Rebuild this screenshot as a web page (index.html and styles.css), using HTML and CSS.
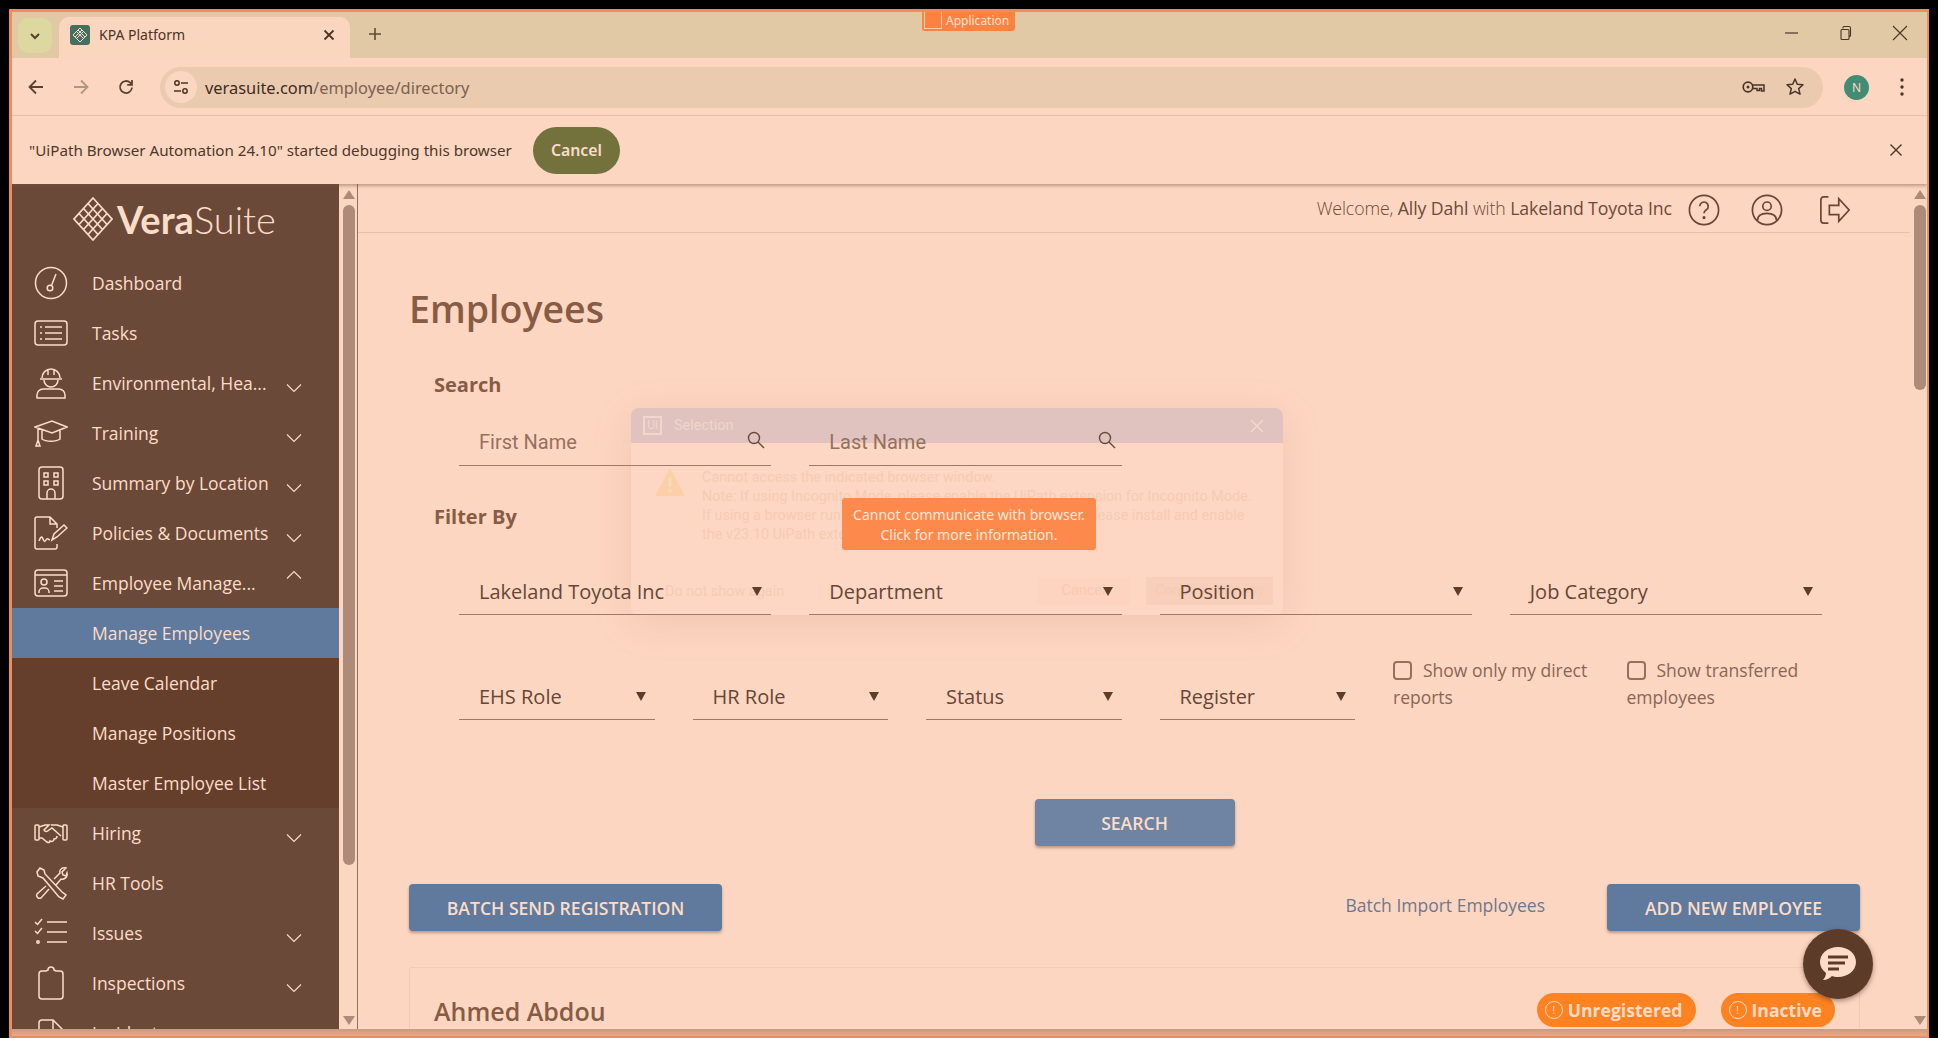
FILE: index.html
```html
<!DOCTYPE html>
<html lang="en">
<head>
    <meta charset="UTF-8">
    <title>KPA Platform</title>
    <link rel="stylesheet" href="styles.css">
</head>
<body>
<div class="window">

    <!-- browser chrome -->
    <div class="tabstrip">
        <button class="tab-search">
            <svg width="14" height="14" viewBox="0 0 14 14"><path d="M3 5l4 4 4-4" fill="none" stroke="#5a3f2c" stroke-width="2"/></svg>
        </button>
        <div class="tab">
            <span class="favicon">
                <svg width="20" height="20" viewBox="0 0 20 20"><path d="M10 3l7 7-7 7-7-7zM6.500 6.500l7 7M13.500 6.500l-7 7M8 5l7 7M12 5l-7 7" fill="none" stroke="#f6dcc6" stroke-width="1"/></svg>
            </span>
            <span class="tab-title">KPA Platform</span>
            <svg class="tab-close" width="14" height="14" viewBox="0 0 14 14"><path d="M2.500 2.500l9 9M11.500 2.500l-9 9" stroke="#4a3426" stroke-width="1.800"/></svg>
        </div>
        <svg class="new-tab" width="16" height="16" viewBox="0 0 16 16"><path d="M8 2v12M2 8h12" stroke="#5f4a36" stroke-width="1.600"/></svg>
        <div class="window-btns">
            <svg width="16" height="16" viewBox="0 0 16 16"><path d="M1 8h13" stroke="#4a3426" stroke-width="1.200"/></svg>
            <svg width="16" height="16" viewBox="0 0 16 16"><path d="M5 3.500V2.500a1 1 0 0 1 1-1h5a1.500 1.500 0 0 1 1.500 1.500v7.500a1 1 0 0 1-1 1H11M3 5.500a1 1 0 0 1 1-1h6a1 1 0 0 1 1 1v8a1 1 0 0 1-1 1H4a1 1 0 0 1-1-1z" fill="none" stroke="#4a3426" stroke-width="1.100"/></svg>
            <svg width="16" height="16" viewBox="0 0 16 16"><path d="M1 1l14 14M15 1L1 15" stroke="#4a3426" stroke-width="1.100"/></svg>
        </div>
    </div>

    <div class="toolbar">
        <svg class="nav-btn" width="20" height="20" viewBox="0 0 20 20"><path d="M17 10H4M10 3.500L3.500 10l6.500 6.500" fill="none" stroke="#5a4030" stroke-width="1.800"/></svg>
        <svg class="nav-btn" width="20" height="20" viewBox="0 0 20 20"><path d="M3 10h13M10 3.500l6.500 6.500-6.500 6.500" fill="none" stroke="#b09680" stroke-width="1.800"/></svg>
        <svg class="nav-btn" width="20" height="20" viewBox="0 0 20 20"><path d="M16 10.500a6 6 0 1 1-1.800-4.800L16 7.500M16 3v4.800h-4.800" fill="none" stroke="#5a4030" stroke-width="1.800"/></svg>
        <div class="omnibox">
            <span class="site-chip">
                <svg width="18" height="18" viewBox="0 0 18 18"><circle cx="5" cy="5" r="2.200" fill="none" stroke="#4a3426" stroke-width="1.500"/><path d="M9 5h7M2 13h7" stroke="#4a3426" stroke-width="1.500"/><circle cx="13" cy="13" r="2.200" fill="none" stroke="#4a3426" stroke-width="1.500"/></svg>
            </span>
            <span class="url">verasuite.com<span class="url-path">/employee/directory</span></span>
            <svg class="omni-icon" width="24" height="16" viewBox="0 0 24 16"><circle cx="6" cy="8" r="4.800" fill="none" stroke="#4a3426" stroke-width="1.700"/><circle cx="6" cy="8" r="1.500" fill="#4a3426"/><path d="M10.500 6h11.500v6h-2.500V9.500h-2V11.500h-2.500V9.500h-4.500" fill="none" stroke="#4a3426" stroke-width="1.500"/></svg>
            <svg class="omni-icon" width="20" height="20" viewBox="0 0 20 20"><path d="M10 2l2.300 5.300 5.700.5-4.300 3.800 1.300 5.600L10 14.300l-5 2.900 1.300-5.600L2 7.800l5.700-.5z" fill="none" stroke="#4a3426" stroke-width="1.500" stroke-linejoin="round"/></svg>
        </div>
        <span class="avatar">N</span>
        <svg class="menu-dots" width="6" height="22" viewBox="0 0 6 22"><circle cx="3" cy="4" r="1.700" fill="#4a3426"/><circle cx="3" cy="11" r="1.700" fill="#4a3426"/><circle cx="3" cy="18" r="1.700" fill="#4a3426"/></svg>
    </div>

    <div class="infobar">
        <span class="info-text">"UiPath Browser Automation 24.10" started debugging this browser</span>
        <button class="info-cancel">Cancel</button>
        <svg class="info-close" width="14" height="14" viewBox="0 0 14 14"><path d="M1.500 1.500l11 11M12.500 1.500l-11 11" stroke="#4a3426" stroke-width="1.400"/></svg>
    </div>

    <!-- page -->
    <div class="page">
        <aside class="sidebar">
            <div class="logo">
                <svg width="40" height="44" viewBox="0 0 40 44"><path d="M20 1l19 21-19 21L1 22zM10.500 11.500l19 21M15 6.500l19 21M6 16.500l19 21M29.500 11.500l-19 21M25 6.500l-19 21M34 16.500l-19 21" fill="none" stroke="#fbdcc8" stroke-width="1.700"/></svg>
                <span class="logo-text"><b>Vera</b>Suite</span>
            </div>
            <nav>
                <a class="nav-item">
                    <svg class="nav-icon" viewBox="0 0 34 34"><circle cx="17" cy="17" r="15.500"/><circle cx="16" cy="22" r="2.800"/><path d="M17.500 19.500L22 8"/></svg>
                    <span class="nav-label">Dashboard</span>
                </a>
                <a class="nav-item">
                    <svg class="nav-icon" viewBox="0 0 34 34"><rect x="1" y="5" width="32" height="24" rx="3"/><path d="M11 11h17M11 17h17M11 23h17M6 11h2M6 17h2M6 23h2"/></svg>
                    <span class="nav-label">Tasks</span>
                </a>
                <a class="nav-item">
                    <svg class="nav-icon" viewBox="0 0 34 34"><path d="M8 12a9 9 0 0 1 18 0M6 13h22M14 4v5M20 4v5M10 14a7 7 0 0 0 14 0M3 32v-3a6 6 0 0 1 6-6h16a6 6 0 0 1 6 6v3z"/></svg>
                    <span class="nav-label">Environmental, Hea...</span>
                    <svg class="caret" viewBox="0 0 16 10"><path d="M1 1.500l7 7 7-7"/></svg>
                </a>
                <a class="nav-item">
                    <svg class="nav-icon" viewBox="0 0 34 34"><path d="M1 11l17-6 15 6-15 6zM8 14v9c4 3 14 3 18 0v-9M4 12v12M2 30l2-6 2 6z"/></svg>
                    <span class="nav-label">Training</span>
                    <svg class="caret" viewBox="0 0 16 10"><path d="M1 1.500l7 7 7-7"/></svg>
                </a>
                <a class="nav-item">
                    <svg class="nav-icon" viewBox="0 0 34 34"><rect x="5" y="1" width="24" height="32" rx="3"/><rect x="10" y="7" width="4" height="4"/><rect x="20" y="7" width="4" height="4"/><rect x="10" y="15" width="4" height="4"/><rect x="20" y="15" width="4" height="4"/><path d="M13 33v-6a4 4 0 0 1 8 0v6"/></svg>
                    <span class="nav-label">Summary by Location</span>
                    <svg class="caret" viewBox="0 0 16 10"><path d="M1 1.500l7 7 7-7"/></svg>
                </a>
                <a class="nav-item">
                    <svg class="nav-icon" viewBox="0 0 34 34"><path d="M23 12V8l-7-7H3a2 2 0 0 0-2 2v28a2 2 0 0 0 2 2h18a2 2 0 0 0 2-2v-3M16 1v7h7M5 25c2-5 3-5 4-2s2 3 3 1 2-1 4 0M18 24l2-6 10-9 3 3-10 9z"/></svg>
                    <span class="nav-label">Policies &amp; Documents</span>
                    <svg class="caret" viewBox="0 0 16 10"><path d="M1 1.500l7 7 7-7"/></svg>
                </a>
                <a class="nav-item">
                    <svg class="nav-icon" viewBox="0 0 34 34"><rect x="1" y="4" width="32" height="26" rx="3"/><path d="M1 9h32M20 15h9M20 20h9M20 25h9M5 27v-1a4 4 0 0 1 4-4h2a4 4 0 0 1 4 4v1"/><circle cx="10" cy="16" r="3"/></svg>
                    <span class="nav-label">Employee Manage...</span>
                    <svg class="caret caret-up" viewBox="0 0 16 10"><path d="M1 8.500l7-7 7 7"/></svg>
                </a>
                <div class="submenu">
                    <a class="sub-item sub-active">Manage Employees</a>
                    <a class="sub-item">Leave Calendar</a>
                    <a class="sub-item">Manage Positions</a>
                    <a class="sub-item">Master Employee List</a>
                </div>
                <a class="nav-item">
                    <svg class="nav-icon" viewBox="0 0 34 34"><rect x="1" y="9" width="4" height="15" rx="1"/><rect x="29" y="9" width="4" height="15" rx="1"/><path d="M5 11l6-2h4l-5 5c1 2 3 2 5 0l3-2 9 8M29 11l-6-2h-6M5 22l3 0 5 4c2 1 3 0 3-1 2 1 4 0 4-2 2 0 3-1 3-3"/></svg>
                    <span class="nav-label">Hiring</span>
                    <svg class="caret" viewBox="0 0 16 10"><path d="M1 1.500l7 7 7-7"/></svg>
                </a>
                <a class="nav-item">
                    <svg class="nav-icon" viewBox="0 0 34 34"><path d="M3 6l3-4 4 2 1 4 17 18 4 3-3 4-4-2L9 12 4 10zM20 13l6-6c-1-3 2-6 6-5l-4 4 1 3 3 1 1-3c1 4-3 7-6 6l-5 6M12 20l-9 8a3 3 0 0 0 4 4l8-9"/></svg>
                    <span class="nav-label">HR Tools</span>
                </a>
                <a class="nav-item">
                    <svg class="nav-icon" viewBox="0 0 34 34"><path d="M1 6l2.500 2.500L8 3M1 15l2.500 2.500L8 12M13 6h20M13 16h20M13 26h20"/><circle cx="4" cy="26" r="1.200"/></svg>
                    <span class="nav-label">Issues</span>
                    <svg class="caret" viewBox="0 0 16 10"><path d="M1 1.500l7 7 7-7"/></svg>
                </a>
                <a class="nav-item">
                    <svg class="nav-icon" viewBox="0 0 34 34"><path d="M12 5H8a3 3 0 0 0-3 3v22a3 3 0 0 0 3 3h18a3 3 0 0 0 3-3V8a3 3 0 0 0-3-3h-4l-2-1a3 3 0 0 0-6 0z"/></svg>
                    <span class="nav-label">Inspections</span>
                    <svg class="caret" viewBox="0 0 16 10"><path d="M1 1.500l7 7 7-7"/></svg>
                </a>
                <a class="nav-item">
                    <svg class="nav-icon" viewBox="0 0 34 34"><path d="M29 33V14L19 4H8a3 3 0 0 0-3 3v26M19 4v10h10"/></svg>
                    <span class="nav-label">Incidents</span>
                </a>
            </nav>
        </aside>

        <div class="scrollbar side-scroll">
            <span class="arrow-up"></span>
            <span class="thumb side-thumb"></span>
            <span class="arrow-down"></span>
        </div>

        <main class="main">
            <header class="topbar">
                <span class="welcome">Welcome, <span class="welcome-name">Ally Dahl</span> with <span class="welcome-name">Lakeland Toyota Inc</span></span>
                <svg class="top-icon" width="32" height="32" viewBox="0 0 34 34"><circle cx="17" cy="17" r="15.500"/><path d="M12.500 13a4.500 4.500 0 1 1 7 3.800c-1.700 1.100-2.500 2-2.500 3.700"/><circle cx="17" cy="25" r=".8"/></svg>
                <svg class="top-icon icon-user" width="32" height="32" viewBox="0 0 34 34"><circle cx="17" cy="17" r="15.500"/><circle cx="17" cy="13" r="4.500"/><path d="M7 28c0-5 4-7.500 10-7.500S27 23 27 28"/></svg>
                <svg class="top-icon icon-logout" width="32" height="32" viewBox="0 0 34 34"><path d="M10 3H5a3 3 0 0 0-3 3v22a3 3 0 0 0 3 3h5M11 12h10V5l11 12-11 12v-7H11z"/></svg>
            </header>

            <section class="content">
                <h1 class="page-title">Employees</h1>

                <h2 class="group-label">Search</h2>
                <div class="grid row-search">
                    <div class="field span-3">
                        <span class="placeholder">First Name</span>
                        <svg class="search-glass" width="18" height="18" viewBox="0 0 18 18"><circle cx="7" cy="7" r="5.500"/><path d="M11 11l6 6"/></svg>
                    </div>
                    <div class="field span-3">
                        <span class="placeholder">Last Name</span>
                        <svg class="search-glass" width="18" height="18" viewBox="0 0 18 18"><circle cx="7" cy="7" r="5.500"/><path d="M11 11l6 6"/></svg>
                    </div>
                </div>

                <h2 class="group-label filter-label">Filter By</h2>
                <div class="grid row-filter">
                    <div class="field span-3"><span>Lakeland Toyota Inc</span><i class="drop"></i></div>
                    <div class="field span-3"><span>Department</span><i class="drop"></i></div>
                    <div class="field span-3"><span>Position</span><i class="drop"></i></div>
                    <div class="field span-3"><span>Job Category</span><i class="drop"></i></div>
                </div>
                <div class="grid row-roles">
                    <div class="field span-2"><span>EHS Role</span><i class="drop"></i></div>
                    <div class="field span-2"><span>HR Role</span><i class="drop"></i></div>
                    <div class="field span-2"><span>Status</span><i class="drop"></i></div>
                    <div class="field span-2"><span>Register</span><i class="drop"></i></div>
                    <label class="check span-2"><i class="box"></i>Show only my direct reports</label>
                    <label class="check span-2"><i class="box"></i>Show transferred employees</label>
                </div>

                <div class="search-row">
                    <button class="btn btn-search">SEARCH</button>
                </div>

                <div class="action-row">
                    <button class="btn btn-batch">BATCH SEND REGISTRATION</button>
                    <a class="import-link">Batch Import Employees</a>
                    <button class="btn btn-add">ADD NEW EMPLOYEE</button>
                </div>

                <div class="card">
                    <span class="card-name">Ahmed Abdou</span>
                    <span class="badge badge-unreg"><i class="badge-dot">!</i>Unregistered</span>
                    <span class="badge"><i class="badge-dot">!</i>Inactive</span>
                </div>
            </section>
        </main>

        <div class="scrollbar main-scroll">
            <span class="arrow-up"></span>
            <span class="thumb main-thumb"></span>
            <span class="arrow-down"></span>
        </div>

        <button class="chat-btn">
            <svg width="40" height="38" viewBox="0 0 40 38"><path d="M20 2c10 0 18 6.500 18 15s-8 15-18 15c-2.500 0-4-.3-6-1-2 2-5 4-9 4 1.500-2 3-4 3-7-4-3-6-7-6-11C2 8.500 10 2 20 2z" fill="#fddcc9"/><path d="M10 12h20M10 18h17M10 24h11" stroke="#5c3c29" stroke-width="3"/></svg>
        </button>

        <!-- UiPath dialog, sits faded behind the page text -->
        <div class="ui-dialog">
            <div class="ui-dialog-head">
                <span class="ui-logo">Ui</span>
                <span class="ui-title">Selection</span>
                <svg class="ui-x" width="16" height="16" viewBox="0 0 16 16"><path d="M2 2l12 12M14 2L2 14" stroke="#f2d8cc" stroke-width="1.500"/></svg>
            </div>
            <div class="ui-dialog-body">
                <svg class="ui-warn" width="30" height="28" viewBox="0 0 30 28"><path d="M15 0l15 28H0z" fill="#fbd0a6"/><rect x="13.500" y="9" width="3" height="10" fill="#fad8bc"/><rect x="13.500" y="21" width="3" height="3" fill="#fad8bc"/></svg>
                <p class="ui-msg">Cannot access the indicated browser window.<br>Note: If using Incognito Mode, please enable the UiPath extension for Incognito Mode.<br>If using a browser running on this device with full privileges, please install and enable<br>the v23.10 UiPath extension for Chrome.</p>
            </div>
            <div class="ui-dialog-foot">
                <span class="ui-noshow">Do not show again</span>
                <span class="ui-btn ui-cancel">Cancel</span>
                <span class="ui-btn ui-continue">Continue anyway</span>
            </div>
        </div>
    </div>

    <div class="bottom-strip"></div>

    <div class="ui-toast">Cannot communicate with browser.<br>Click for more information.</div>
    <div class="app-tag"><i class="app-square"></i>Application</div>
</div>
</body>
</html>
```
FILE: styles.css
```css
html, body {
    margin: 0;
    height: 100%;
    overflow: hidden;
    background: #000;
}
.window {
    position: relative;
    box-sizing: border-box;
    width: 1920px;
    height: 1029px;
    margin: 9px 0 0 9px;
    border: 3px solid #f08c5c;
    border-right-width: 2px;
    border-bottom-width: 2px;
    background: #fdd6c1;
    display: flex;
    flex-direction: column;
    overflow: hidden;
    font-family: "Open Sans", sans-serif;
}

/* tab strip */
.tabstrip {
    height: 46px;
    flex: none;
    background: #e0c9a4;
    display: flex;
    align-items: flex-end;
    position: relative;
}
.tab-search {
    width: 34px;
    height: 35px;
    margin: 0 7px 5px 6px;
    border: none;
    border-radius: 10px;
    background: #dcd8a0;
    padding: 0;
    display: flex;
    align-items: center;
    justify-content: center;
}
.tab {
    width: 291px;
    height: 41px;
    background: #fbd6bf;
    border-radius: 10px 10px 0 0;
    display: flex;
    align-items: center;
    box-sizing: border-box;
    padding: 0 0 6px 11px;
}
.favicon {
    width: 20px;
    height: 20px;
    background: #45705f;
    border-radius: 3px;
    display: block;
}
.favicon svg { display: block; }
.tab-title {
    margin-left: 9px;
    font-family: "Noto Sans", sans-serif;
    font-size: 14px;
    color: #4a3426;
    width: 223px;
}
.new-tab {
    margin: 0 0 16px 17px;
}
.window-btns {
    margin-left: auto;
    display: flex;
    gap: 38px;
    padding: 0 19px 17px 0;
}

/* toolbar */
.toolbar {
    height: 58px;
    flex: none;
    box-sizing: border-box;
    border-bottom: 1px solid #eec4a9;
    display: flex;
    align-items: center;
    padding: 1px 0 0 14px;
    background: #fcd6c0;
}
.nav-btn {
    margin-right: 25px;
}
.omnibox {
    width: 1663px;
    height: 41px;
    margin-left: -1px;
    background: #ebcbaf;
    border-radius: 21px;
    display: flex;
    align-items: center;
    box-sizing: border-box;
    padding: 0 18px 0 5px;
}
.site-chip {
    width: 32px;
    height: 32px;
    border-radius: 50%;
    background: #fbd7c1;
    display: flex;
    align-items: center;
    justify-content: center;
}
.url {
    margin-left: 8px;
    font-family: "Noto Sans", sans-serif;
    font-size: 16.400px;
    color: #3f2c20;
    flex: 1;
}
.url-path { color: #7a6250; }
.omni-icon { margin-left: 19px; }
.avatar {
    width: 25px;
    height: 25px;
    margin-left: 21px;
    border-radius: 50%;
    background: #418c72;
    color: #fdd9c2;
    font: 12px "Noto Sans", sans-serif;
    display: flex;
    align-items: center;
    justify-content: center;
}
.menu-dots { margin-left: 30px; }

/* debugging bar */
.infobar {
    height: 68px;
    flex: none;
    display: flex;
    align-items: center;
    padding-left: 17px;
    background: #fcd6c0;
    box-shadow: 0 2px 3px rgba(120, 80, 60, .45);
    position: relative;
    z-index: 2;
}
.info-text {
    font-family: "Noto Sans", sans-serif;
    font-size: 15.200px;
    color: #4e3729;
    width: 504px;
    white-space: nowrap;
}
.info-cancel {
    width: 87px;
    height: 47px;
    border: none;
    border-radius: 24px;
    background: #73713c;
    color: #fbdcc8;
    font: 600 15.800px "Noto Sans", sans-serif;
}
.info-close { margin-left: auto; margin-right: 24px; }

/* page area */
.page {
    flex: 1;
    min-height: 0;
    display: flex;
    position: relative;
    overflow: hidden;
}
.sidebar {
    width: 327px;
    flex: none;
    background: #6b4938;
    overflow: hidden;
    color: #fddcc8;
}
.logo {
    height: 74px;
    display: flex;
    align-items: center;
    box-sizing: border-box;
    padding: 0 0 4px 61px;
}
.logo-text {
    margin-left: 4px;
    font-family: Lato, sans-serif;
    font-weight: 300;
    font-size: 38px;
    color: #fddcc8;
}
.logo-text b { font-weight: 700; }
.nav-item {
    height: 50px;
    display: flex;
    align-items: center;
    padding-left: 22px;
    box-sizing: border-box;
    position: relative;
}
.nav-icon {
    width: 34px;
    height: 34px;
    fill: none;
    stroke: #fddcc8;
    stroke-width: 1.500;
}
.nav-label {
    margin-left: 24px;
    font-size: 17.500px;
    color: #fddcc8;
    white-space: nowrap;
}
.caret {
    position: absolute;
    left: 274px;
    top: 25px;
    width: 16px;
    height: 10px;
    fill: none;
    stroke: #fddcc8;
    stroke-width: 1.100;
}
.caret-up { top: 12px; }
.submenu { background: #653f2c; }
.sub-item {
    display: flex;
    align-items: center;
    height: 50px;
    padding-left: 80px;
    font-size: 17.500px;
    color: #fddcc8;
}
.sub-active { background: #5f7a9d; }

/* scrollbars */
.scrollbar {
    position: relative;
    flex: none;
    background: #fbd6c0;
}
.side-scroll {
    box-sizing: border-box;
    width: 19px;
    border-right: 1px solid #91705f;
}
.main-scroll {
    width: 17px;
}
.thumb {
    position: absolute;
    left: 4px;
    width: 12px;
    top: 21px;
    border-radius: 6px;
    background: #ae8a78;
}
.side-thumb { height: 660px; }
.main-thumb { height: 185px; }
.arrow-up, .arrow-down {
    position: absolute;
    left: 4px;
    width: 0;
    height: 0;
    border-left: 6px solid transparent;
    border-right: 6px solid transparent;
}
.arrow-up { top: 6px; border-bottom: 9px solid #ae8a78; }
.arrow-down { bottom: 4px; border-top: 9px solid #ae8a78; }

/* main column */
.main {
    flex: 1;
    min-width: 0;
    overflow: hidden;
}
.topbar {
    height: 49px;
    box-sizing: border-box;
    border-bottom: 1px solid #e8bfa8;
    display: flex;
    align-items: center;
    justify-content: flex-end;
    padding-right: 59px;
}
.welcome {
    font-size: 17.700px;
    font-weight: 300;
    color: #6b4a3a;
    margin-right: 16px;
    letter-spacing: -.1px;
}
.welcome-name { font-weight: 400; }
.top-icon {
    fill: none;
    stroke: #6a4534;
    stroke-width: 1.800;
    margin-top: 4px;
}
.icon-user { margin-left: 31px; }
.icon-logout { margin-left: 36px; }

.content {
    padding-left: 51px;
    position: relative;
    z-index: 1;
}
.page-title {
    margin: 54px 0 0;
    font-size: 37.500px;
    line-height: 44px;
    font-weight: 600;
    color: #875b44;
}
.group-label {
    margin: 41px 0 0 25px;
    font-size: 20px;
    line-height: 26px;
    font-weight: 700;
    color: #875b44;
}
.filter-label { margin-top: 38px; }

/* 12 col form grid */
.grid {
    display: grid;
    grid-template-columns: repeat(12, 116.750px);
    width: 1401px;
    margin-left: 31px;
    color: #664636;
}
.span-3 { grid-column: span 3; }
.span-2 { grid-column: span 2; }
.field {
    position: relative;
    box-sizing: border-box;
    height: 50px;
    margin: 0 19px;
    border-bottom: 1px solid #a07a66;
    display: flex;
    align-items: center;
    padding: 3px 0 0 20px;
    font-size: 20px;
    white-space: nowrap;
}
.row-search { margin-top: 18px; }
.row-filter { margin-top: 35px; }
.row-roles { margin-top: 55px; }
.placeholder {
    font-family: Roboto, sans-serif;
    color: #95705e;
}
.search-glass {
    position: absolute;
    right: 6px;
    top: 15px;
    fill: none;
    stroke: #6b4a3a;
    stroke-width: 1.400;
}
.drop {
    position: absolute;
    right: 9px;
    top: 22px;
    width: 0;
    height: 0;
    border-left: 5px solid transparent;
    border-right: 5px solid transparent;
    border-top: 9px solid #5c3c2b;
}
.check {
    font-size: 17.500px;
    line-height: 27px;
    color: #8a6555;
    margin-left: 19px;
    position: relative;
    top: -13px;
}
.box {
    display: inline-block;
    box-sizing: border-box;
    width: 19px;
    height: 19px;
    border: 2px solid #96705f;
    border-radius: 4px;
    margin-right: 11px;
    vertical-align: -3px;
}

/* buttons */
.btn {
    border: none;
    border-radius: 4px;
    color: #fddcc8;
    font-family: "Open Sans", sans-serif;
    font-size: 17.600px;
    font-weight: 600;
    height: 47px;
    background: #5f7a9d;
    box-shadow: 0 2px 3px rgba(90, 60, 50, .4);
}
.search-row {
    width: 1451px;
    display: flex;
    justify-content: center;
    margin-top: 75px;
}
.btn-search {
    width: 200px;
    background: #6f84a2;
}
.action-row {
    display: flex;
    align-items: center;
    width: 1451px;
    margin-top: 38px;
}
.btn-batch { width: 313px; }
.btn-add { width: 253px; }
.import-link {
    margin-left: auto;
    margin-right: 62px;
    font-size: 17.500px;
    color: #6d7890;
    position: relative;
    top: -3px;
}
.card {
    box-sizing: border-box;
    width: 1451px;
    height: 80px;
    margin-top: 36px;
    border: 1px solid #f2c9b2;
    border-bottom: none;
    border-radius: 3px 3px 0 0;
    display: flex;
    align-items: flex-start;
    padding: 24px 24px 0 24px;
}
.card-name {
    font-size: 25px;
    line-height: 38px;
    font-weight: 600;
    color: #875b44;
    margin-right: auto;
}
.badge {
    height: 34px;
    box-sizing: border-box;
    border-radius: 17px;
    background: #fd8221;
    color: #fddcc8;
    font-size: 17.600px;
    font-weight: 700;
    display: flex;
    align-items: center;
    padding: 0 13px 0 8px;
    margin-top: 1px;
}
.badge-unreg { margin-right: 25px; }
.badge-dot {
    width: 16px;
    height: 16px;
    border: 1px solid #fddcc8;
    border-radius: 50%;
    font: 400 11px "Open Sans", sans-serif;
    text-align: center;
    line-height: 16px;
    margin-right: 5px;
}
.chat-btn {
    position: absolute;
    left: 1791px;
    top: 745px;
    width: 70px;
    height: 70px;
    padding: 0;
    border: none;
    border-radius: 50%;
    background: #5c3c29;
    box-shadow: 0 2px 5px rgba(80, 50, 40, .5);
    display: flex;
    align-items: center;
    justify-content: center;
    z-index: 2;
}
.bottom-strip {
    height: 7px;
    flex: none;
    background: linear-gradient(#c99a83, #eba884);
}

/* UiPath overlay */
.ui-dialog {
    position: absolute;
    left: 619px;
    top: 224px;
    width: 652px;
    height: 207px;
    border-radius: 8px;
    background: rgba(253, 216, 197, .62);
    box-shadow: 0 8px 40px rgba(170, 110, 85, .15);
    color: #f6cbb3;
    font-family: Roboto, sans-serif;
    font-size: 14.450px;
    overflow: hidden;
}
.ui-dialog-head {
    height: 35px;
    background: rgba(195, 175, 185, .5);
    display: flex;
    align-items: center;
    padding-left: 12px;
}
.ui-logo {
    width: 19px;
    height: 19px;
    border: 2px solid #f0d6cd;
    box-sizing: border-box;
    color: #f0d6cd;
    font-size: 12px;
    line-height: 15px;
    text-align: center;
}
.ui-title {
    margin-left: 12px;
    color: #eed6cc;
}
.ui-x {
    margin-left: auto;
    margin-right: 18px;
}
.ui-dialog-body {
    display: flex;
    padding: 25px 0 0 24px;
}
.ui-warn { flex: none; }
.ui-msg {
    margin: 0 0 0 17px;
    line-height: 19px;
    white-space: nowrap;
}
.ui-dialog-foot {
    display: flex;
    align-items: center;
    padding: 33px 10px 0 34px;
}
.ui-noshow { margin-right: auto; }
.ui-btn {
    height: 28px;
    line-height: 28px;
    text-align: center;
    background: rgba(250, 205, 180, .25);
}
.ui-cancel { width: 93px; margin-right: 16px; }
.ui-continue { width: 127px; background: rgba(235, 190, 165, .3); }
.ui-toast {
    position: absolute;
    left: 830px;
    top: 486px;
    width: 254px;
    height: 52px;
    box-sizing: border-box;
    padding-top: 7px;
    border-radius: 3px;
    background: #fd8a4c;
    color: #fde8da;
    font-family: "Noto Sans", sans-serif;
    font-size: 14px;
    line-height: 20px;
    text-align: center;
    z-index: 5;
}
.app-tag {
    position: absolute;
    left: 910px;
    top: -3px;
    width: 93px;
    height: 22px;
    box-sizing: border-box;
    background: #fd8242;
    border-radius: 0 0 3px 3px;
    color: #fde3d0;
    font-family: "Noto Sans", sans-serif;
    font-size: 12px;
    line-height: 21px;
    display: flex;
    align-items: center;
    padding-left: 2px;
    z-index: 5;
}
.app-square {
    width: 16px;
    height: 16px;
    border: 1px solid #f8cfa8;
    margin-right: 4px;
}
```
